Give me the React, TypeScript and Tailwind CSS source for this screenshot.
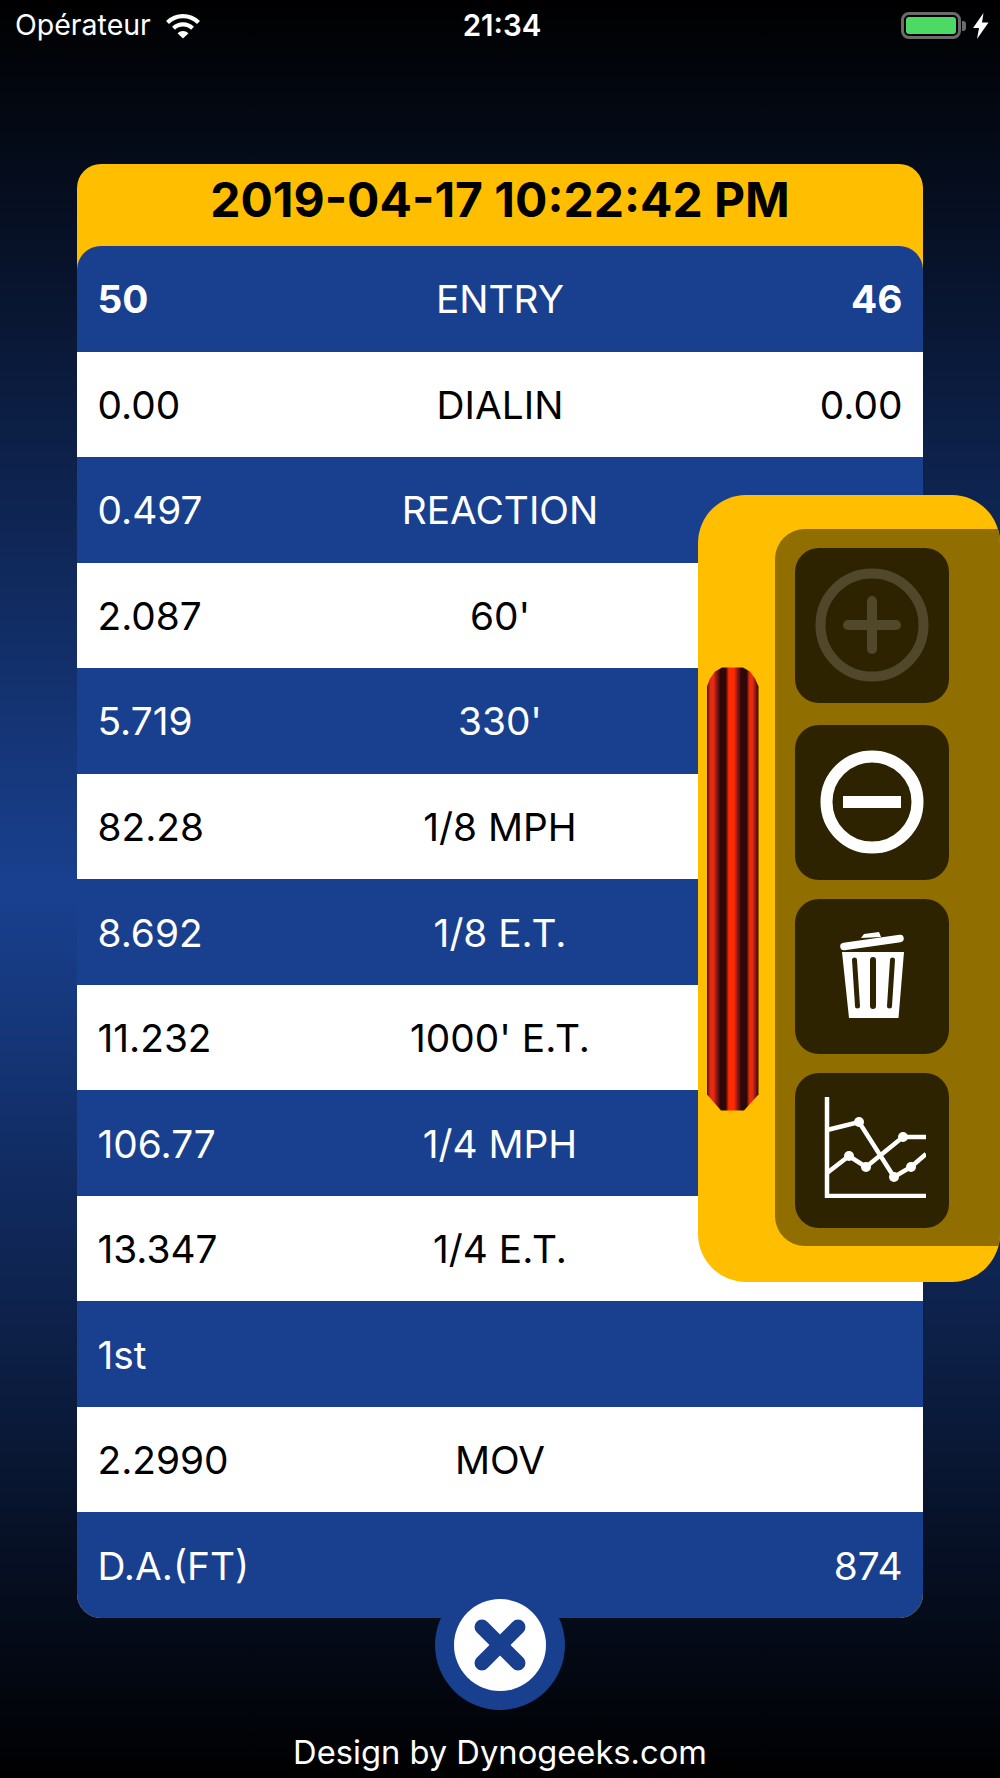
const FONT = "font-['Inter','Liberation_Sans',sans-serif]";

type Row = { left: string; label?: string; right?: string; bold?: boolean };

const ROWS: Row[] = [
  { left: "50", label: "ENTRY", right: "46", bold: true },
  { left: "0.00", label: "DIALIN", right: "0.00" },
  { left: "0.497", label: "REACTION" },
  { left: "2.087", label: "60'" },
  { left: "5.719", label: "330'" },
  { left: "82.28", label: "1/8 MPH" },
  { left: "8.692", label: "1/8 E.T." },
  { left: "11.232", label: "1000' E.T." },
  { left: "106.77", label: "1/4 MPH" },
  { left: "13.347", label: "1/4 E.T." },
  { left: "1st" },
  { left: "2.2990", label: "MOV" },
  { left: "D.A.(FT)", right: "874" },
];

function WifiIcon() {
  return (
    <svg width="36" height="26" viewBox="0 0 36 26" className="ml-[14px]">
      <path d="M2.5 9.5a22 22 0 0 1 31 0" fill="none" stroke="white" strokeWidth="4.2" />
      <path d="M8.5 15.2a13.5 13.5 0 0 1 19 0" fill="none" stroke="white" strokeWidth="4.2" />
      <path d="M12.5 20.2 18 25.5l5.5-5.3a8 8 0 0 0-11 0z" fill="white" />
    </svg>
  );
}

function BatteryIcon() {
  return (
    <div className="flex items-center">
      <div className="w-[60px] h-[27px] rounded-[8px] border-[3px] border-[#6b6b6b] p-[2px]">
        <div className="w-full h-full rounded-[3px] bg-[#4cd964]" />
      </div>
      <div className="w-[4px] h-[10px] ml-[1px] rounded-r-[3px] bg-[#6b6b6b]" />
      <svg width="16" height="26" viewBox="0 0 16 26" className="ml-[7px]">
        <path d="M10.5 0 0 15h6L4 26 15.5 9.5H9z" fill="white" />
      </svg>
    </div>
  );
}

function StatusBar() {
  return (
    <div className="h-[51px] pl-[15px] pr-[11px] grid grid-cols-3 items-center text-white">
      <div className="flex items-center">
        <span className="text-[28.500px] leading-none">Opérateur</span>
        <WifiIcon />
      </div>
      <div className="text-center text-[29.500px] font-semibold leading-none">21:34</div>
      <div className="flex justify-end">
        <BatteryIcon />
      </div>
    </div>
  );
}

function TableRow({ row, index }: { row: Row; index: number }) {
  const blue = index % 2 === 0;
  return (
    <div
      className={`h-[105.54px] px-[20.500px] pt-[2px] grid grid-cols-[1fr_auto_1fr] items-center text-[38.800px] leading-none ${
        blue ? "bg-[#19408f] text-white" : "bg-white text-black"
      }`}
    >
      <span className={row.bold ? "font-bold" : ""}>{row.left}</span>
      <span className="text-center">{row.label}</span>
      <span className={`text-right ${row.bold ? "font-bold" : ""}`}>{row.right}</span>
    </div>
  );
}

function Card() {
  return (
    <div className="mx-[77px] mt-[113px] rounded-[24px] overflow-hidden bg-[#ffbf00]">
      <div className="h-[82px] pb-[10px] flex items-center justify-center text-[48px] font-bold text-black leading-none">
        2019-04-17 10:22:42 PM
      </div>
      <div className="rounded-t-[24px] overflow-hidden">
        {ROWS.map((row, i) => (
          <TableRow key={i} row={row} index={i} />
        ))}
      </div>
    </div>
  );
}

function PlusIcon() {
  return (
    <svg width="114" height="114" viewBox="0 0 114 114" className="opacity-[0.17]">
      <circle cx="57" cy="57" r="51.5" fill="none" stroke="white" strokeWidth="10" />
      <path d="M57 33v48M33 57h48" stroke="white" strokeWidth="10" strokeLinecap="round" />
    </svg>
  );
}

function MinusIcon() {
  return (
    <svg width="104" height="104" viewBox="0 0 104 104">
      <circle cx="52" cy="52" r="45.5" fill="none" stroke="white" strokeWidth="12" />
      <rect x="23" y="46" width="58" height="12" fill="white" />
    </svg>
  );
}

function TrashIcon() {
  return (
    <svg width="66" height="88" viewBox="0 0 66 88" className="ml-[2px] mt-[-3px]">
      <path d="M4 15.5 60 7.5" stroke="white" strokeWidth="7.5" strokeLinecap="round" />
      <path d="M21 7 24 3 39 1 41 6z" fill="white" />
      <path
        fillRule="evenodd"
        d="M2 21h62L58.500 87H9zM12 29a2.500 2.500 0 0 1 5 0l3 46a2.500 2.500 0 0 1-5 0zM30 29a3 3 0 0 1 6 0v46a3 3 0 0 1-6 0zM50 29a2.500 2.500 0 0 1 5 0l-3 46a2.500 2.500 0 0 1-5 0z"
        fill="white"
      />
    </svg>
  );
}

function ChartIcon() {
  return (
    <svg width="102" height="102" viewBox="0 0 102 102" className="ml-[6px] mt-[-7px]">
      <path d="M3 1v99h100" fill="none" stroke="white" strokeWidth="4.500" />
      <path d="M3 34 35 26 70 81 87 71 102 58" fill="none" stroke="white" strokeWidth="4.500" />
      <path d="M3 77 25 60 42 71 79 41H102" fill="none" stroke="white" strokeWidth="4.500" />
      {[
        [35, 26],
        [70, 81],
        [87, 71],
        [25, 60],
        [42, 71],
        [79, 41],
      ].map(([cx, cy]) => (
        <circle key={`${cx}-${cy}`} cx={cx} cy={cy} r="5" fill="white" />
      ))}
    </svg>
  );
}

function ToolButton({ children, className = "" }: { children: React.ReactNode; className?: string }) {
  return (
    <div className={`shrink-0 w-[154px] h-[154.500px] rounded-[24px] bg-[#2d2300] flex items-center justify-center ${className}`}>
      {children}
    </div>
  );
}

// slide-out tools drawer, hangs over the right side of the table
function Drawer() {
  return (
    <div className="absolute left-[698px] top-[495px] w-[302px] h-[787px] rounded-[48px] overflow-hidden bg-[#ffbf00] flex items-center">
      <div className="shrink-0 w-[51.500px] h-[444px] ml-[9px] [clip-path:polygon(0_20px,3px_12px,8px_5px,15px_1px,36px_1px,43px_5px,48px_12px,100%_20px,100%_calc(100%-16px),37px_100%,14px_100%,0_calc(100%-16px))] bg-[linear-gradient(90deg,#3a0c0c_0%,#e02a10_6%,#f02a10_12%,#7a1518_20%,#2d0808_26%,#2d0808_36%,#ff2a00_42%,#ff2a00_52%,#7a1518_60%,#2d0808_66%,#2d0808_76%,#f02a08_82%,#e02a10_88%,#7a1518_94%,#2d0808_100%)]" />
      <div className="shrink-0 ml-[16.500px] w-[225px] h-[717px] mt-[-2px] rounded-l-[30px] bg-[#916e00] pl-[19.500px] pt-[19px] flex flex-col">
        <ToolButton>
          <PlusIcon />
        </ToolButton>
        <ToolButton className="mt-[22.500px]">
          <MinusIcon />
        </ToolButton>
        <ToolButton className="mt-[19.500px]">
          <TrashIcon />
        </ToolButton>
        <ToolButton className="mt-[19.500px]">
          <ChartIcon />
        </ToolButton>
      </div>
    </div>
  );
}

function CloseButton() {
  return (
    <div className="absolute left-[435px] top-[1580px] w-[130px] h-[130px] rounded-full bg-[#19408f] flex items-center justify-center">
      <div className="w-[92px] h-[92px] rounded-full bg-white flex items-center justify-center">
        <svg width="54" height="54" viewBox="0 0 54 54">
          <path d="M9 9 45 45M45 9 9 45" stroke="#19408f" strokeWidth="15" strokeLinecap="round" />
        </svg>
      </div>
    </div>
  );
}

export default function App() {
  return (
    <div
      className={`relative w-[1000px] h-[1778px] overflow-hidden bg-linear-to-b/srgb from-black via-[#19408f] to-black ${FONT}`}
    >
      <StatusBar />
      <Card />
      <Drawer />
      <CloseButton />
      <div className="mt-[118.500px] text-center text-white text-[32.700px] leading-none">
        Design by Dynogeeks.com
      </div>
    </div>
  );
}
